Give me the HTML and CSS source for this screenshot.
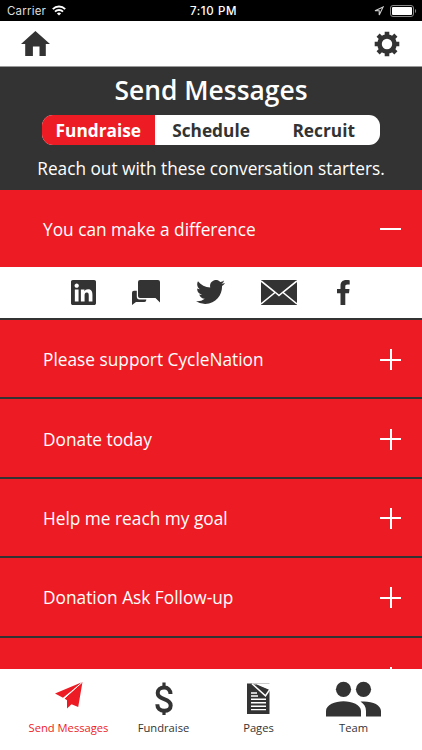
FILE: index.html
```html
<!DOCTYPE html>
<html lang="en">
<head>
    <meta charset="UTF-8">
    <meta name="viewport" content="width=device-width, initial-scale=1.0">
    <title>Send Messages</title>
    <link rel="stylesheet" href="styles.css">
</head>
<body>
<div class="app">

    <div class="status-bar">
        <div class="status-left">
            <span>Carrier</span>
            <svg class="wifi" width="14" height="11" viewBox="0 0 14 11" fill="none" stroke="#fff" stroke-width="1.9">
                <path d="M.8 4.1a8.8 8.8 0 0 1 12.4 0M3 6.6a5.7 5.7 0 0 1 8 0"/>
                <path d="M7 10.6 4.9 8.5a3 3 0 0 1 4.2 0z" fill="#fff" stroke="none"/>
            </svg>
        </div>
        <span class="time">7:10 PM</span>
        <div class="status-right">
            <svg width="10" height="10" viewBox="0 0 9 9" fill="none" stroke="#ccc" stroke-width="1"><path d="M8.2.8.9 4.3h3.8v3.8z"/></svg>
            <svg width="27" height="12" viewBox="0 0 27 12">
                <rect x=".5" y=".5" width="23" height="11" rx="2.5" fill="none" stroke="#888"/>
                <rect x="2" y="2" width="20" height="8" rx="1" fill="#fff"/>
                <path d="M25 4c1.5.6 1.5 3.4 0 4z" fill="#888"/>
            </svg>
        </div>
    </div>

    <header>
        <a class="home"><svg width="29" height="25" viewBox="0 0 29 25" fill="#333"><path d="M14.4 0 29 13h-4.2v12h-6.3v-9.4h-6.6V25H4.2V13H0z"/></svg></a>
        <a class="settings"><svg width="26" height="26" viewBox="-13 -13 26 26" stroke="#333" fill="none">
            <circle r="7.500" stroke-width="4.600"/>
            <path stroke-width="4.600" stroke-linejoin="round" d="M0-12.300v4M0 12.300v-4M-12.300 0h4M12.300 0h-4"/>
            <path stroke-width="4.400" d="m-8.900-8.900 3 3M8.900 8.900l-3-3M-8.900 8.900l3-3M8.900-8.900l-3 3"/>
        </svg></a>
    </header>

    <div class="intro">
        <h1>Send Messages</h1>
        <div class="tabs">
            <a class="tab active">Fundraise</a>
            <a class="tab">Schedule</a>
            <a class="tab">Recruit</a>
        </div>
        <p>Reach out with these conversation starters.</p>
    </div>

    <main>
        <div class="message open">
            <span>You can make a difference</span>
            <i class="toggle minus"></i>
        </div>
        <div class="share">
            <svg width="25" height="25" viewBox="0 32 448 448" fill="#333"><path d="M416 32H31.900C14.300 32 0 46.500 0 64.300v383.400C0 465.500 14.300 480 31.900 480H416c17.600 0 32-14.500 32-32.300V64.300c0-17.800-14.400-32.300-32-32.300zM135.400 416H69V202.200h66.500V416zm-33.200-243c-21.300 0-38.500-17.300-38.500-38.500S80.900 96 102.200 96c21.200 0 38.500 17.300 38.500 38.500 0 21.300-17.200 38.500-38.500 38.500zm282.100 243h-66.400V312c0-24.800-.5-56.700-34.500-56.700-34.600 0-39.900 27-39.900 54.900V416h-66.400V202.200h63.700v29.200h.9c8.900-16.800 30.600-34.500 62.900-34.500 67.200 0 79.700 44.300 79.700 101.900V416z"/></svg>
            <svg width="28" height="25" viewBox="0 0 28 25" fill="#333">
                <path d="M8 0h18q2 0 2 2v20.500L23.500 18H8q-2 0-2-2V2q0-2 2-2z"/>
                <path d="M4.800 10.800V16.500q0 2.900 2.700 2.900h6.800v.6q0 2-2 2H4l-4 3V12.800q0-2 2-2z"/>
            </svg>
            <svg width="29" height="24" viewBox="0 2.200 24 19.600" preserveAspectRatio="none" fill="#333"><path d="M23.953 4.570a10 10 0 01-2.825.775 4.958 4.958 0 002.163-2.723c-.951.555-2.005.959-3.127 1.184a4.920 4.920 0 00-8.384 4.482C7.690 8.095 4.067 6.130 1.640 3.162a4.822 4.822 0 00-.666 2.475c0 1.710.870 3.213 2.188 4.096a4.904 4.904 0 01-2.228-.616v.060a4.923 4.923 0 003.946 4.827 4.996 4.996 0 01-2.212.085 4.936 4.936 0 004.604 3.417 9.867 9.867 0 01-6.102 2.105c-.390 0-.779-.023-1.170-.067a13.995 13.995 0 007.557 2.209c9.053 0 13.998-7.496 13.998-13.985 0-.210 0-.420-.015-.630A9.935 9.935 0 0024 4.590z"/></svg>
            <svg width="36" height="25" viewBox="0 0 36 25">
                <path d="M0 0h36v25H0z" fill="#333"/>
                <path d="m0 1 14.500 11.500 3.500 3 3.500-3L36 1M0 24l14-11.500M36 24 22 12.500" fill="none" stroke="#fff" stroke-width="1.600"/>
            </svg>
            <svg class="facebook" width="13" height="25" viewBox="0 0 13 25" fill="#333"><path d="M12.700.2v4.200h-2.200c-1.800 0-2.200.8-2.200 2V9h4.200l-.5 4.200H8.300V25H3.500V13.200H0V9h3.500V5.900C3.500 2.100 5.700 0 9.200 0c1.600 0 3 .1 3.500.2z"/></svg>
        </div>
        <div class="message">
            <span>Please support CycleNation</span>
            <i class="toggle"></i>
        </div>
        <div class="message">
            <span>Donate today</span>
            <i class="toggle"></i>
        </div>
        <div class="message">
            <span>Help me reach my goal</span>
            <i class="toggle"></i>
        </div>
        <div class="message">
            <span>Donation Ask Follow-up</span>
            <i class="toggle"></i>
        </div>
        <div class="message">
            <span></span>
            <i class="toggle"></i>
        </div>
    </main>

    <nav>
        <a class="nav-item active">
            <svg width="28" height="36" viewBox="0 0 28 36" fill="#ed1c24">
                <path d="M27.500 1 0 12.500l8 4.200zM27.500 1 9.500 17.500l2.500 1.700V27.500l4.500-4.300 6.700 2.800z"/>
                <path d="M27.500 1 9 17.500" stroke="#fff" stroke-width="1"/>
            </svg>
            <span>Send Messages</span>
        </a>
        <a class="nav-item">
            <svg width="18" height="36" viewBox="0 0 18 36" fill="none" stroke="#333">
                <path d="M9 1.500v5M9 29v5" stroke-width="3.200"/>
                <path d="M15.500 13C15.500 9 13 6.600 9.200 6.600 5.300 6.600 2.700 8.800 2.700 12c0 3.500 2.500 4.800 6.500 6.200 4 1.400 6.500 2.800 6.500 6.300 0 3.300-2.500 5.300-6.400 5.300-4.300 0-7-2.300-7-6.500" stroke-width="4"/>
            </svg>
            <span>Fundraise</span>
        </a>
        <a class="nav-item">
            <svg width="23" height="36" viewBox="0 0 23 36">
                <path d="M0 2.500h22.500V33H0z" fill="#333"/>
                <path d="M5.500 2.500H23v7z" fill="#fff"/>
                <path d="m8 2.800 14 6-4 4.200z" fill="#333"/>
                <path d="m5 2.800 13.500 12L22.500 9" fill="none" stroke="#fff" stroke-width="1.500"/>
                <path d="M4 12h6M4 15h7M4 18.200h15M4 21.800h15M4 25.200h15M4 28.600h15" stroke="#fff" stroke-width="1.400"/>
            </svg>
            <span>Pages</span>
        </a>
        <a class="nav-item">
            <svg width="55" height="36" viewBox="0 0 55 36" fill="#333">
                <circle cx="17.500" cy="8.300" r="7.600"/>
                <circle cx="37.500" cy="8.300" r="7.600"/>
                <path d="M0 35.500V30c0-6 9-9.700 17.500-9.700S35 24 35 30v5.500zM34.500 20.600C45 19.500 55 23.500 55 30v5.500H40V30c0-4-2-7-5.500-9.400z"/>
            </svg>
            <span>Team</span>
        </a>
    </nav>

</div>
</body>
</html>
```

FILE: styles.css
```css
* {
    box-sizing: border-box;
}

body {
    margin: 0;
    font-family: "Open Sans", sans-serif;
    color: #333;
}

.app {
    height: 750px;
    display: flex;
    flex-direction: column;
    overflow: hidden;
    background-color: #fff;
}

svg {
    display: block;
    flex: none;
}

.status-bar {
    height: 21px;
    flex: none;
    display: grid;
    grid-template-columns: 1fr auto 1fr;
    align-items: center;
    padding: 0 5px 0 7px;
    background-color: #000;
    color: #fff;
    font-family: Inter, sans-serif;
    font-size: 11.5px;
}

.status-left,
.status-right {
    display: flex;
    align-items: center;
    gap: 6px;
}

.status-left span {
    color: #ddd;
    letter-spacing: 0.2px;
}

.status-right {
    justify-content: flex-end;
}

.time {
    font-weight: 500;
    letter-spacing: 0.6px;
    padding-left: 3px;
}

header {
    height: 46px;
    flex: none;
    display: flex;
    justify-content: space-between;
    align-items: center;
    padding: 0 22px 0 21px;
    border-bottom: 1px solid #999;
}

.intro {
    height: 123px;
    flex: none;
    padding: 4px 0 0;
    background-color: #333;
    color: #fff;
    text-align: center;
}

h1 {
    margin: 0;
    font-size: 26.4px;
    font-weight: 600;
    line-height: 38px;
}

.tabs {
    width: 338px;
    height: 30px;
    margin: 6px auto 0;
    display: flex;
    border-radius: 11px;
    overflow: hidden;
    background-color: #fff;
}

.tab {
    flex: 1;
    color: #333;
    font-size: 17.3px;
    font-weight: 700;
    line-height: 31px;
}

.tab.active {
    background-color: #ed1c24;
    color: #fff;
}

.intro p {
    margin: 11px 0 0;
    font-size: 17.25px;
    line-height: 26px;
}

main {
    height: 479px;
    flex: none;
    overflow: hidden;
}

.message {
    height: 79.4px;
    display: flex;
    justify-content: space-between;
    align-items: center;
    padding: 2px 21px 0 43px;
    border-top: 2px solid #333;
    background-color: #ed1c24;
    color: #fff;
    font-size: 17.3px;
}

.message.open {
    height: 77px;
    padding-top: 1px;
    border-top: 0;
}

.toggle {
    width: 21px;
    height: 21px;
    background: linear-gradient(#fff, #fff) center / 21px 2px no-repeat,
                linear-gradient(#fff, #fff) center / 2px 21px no-repeat;
}

.toggle.minus {
    background: linear-gradient(#fff, #fff) center / 21px 2px no-repeat;
}

.share {
    height: 51px;
    display: flex;
    align-items: center;
    gap: 36px;
    padding: 0 0 1px 71px;
}

.facebook {
    margin-left: 4px;
}

nav {
    flex: 1;
    display: flex;
    justify-content: center;
    padding-top: 12px;
}

.nav-item {
    width: 95px;
    display: flex;
    flex-direction: column;
    align-items: center;
    font-size: 11.2px;
    line-height: 17px;
}

.nav-item span {
    margin-top: 2px;
}

.nav-item.active {
    color: #ed1c24;
}
```
